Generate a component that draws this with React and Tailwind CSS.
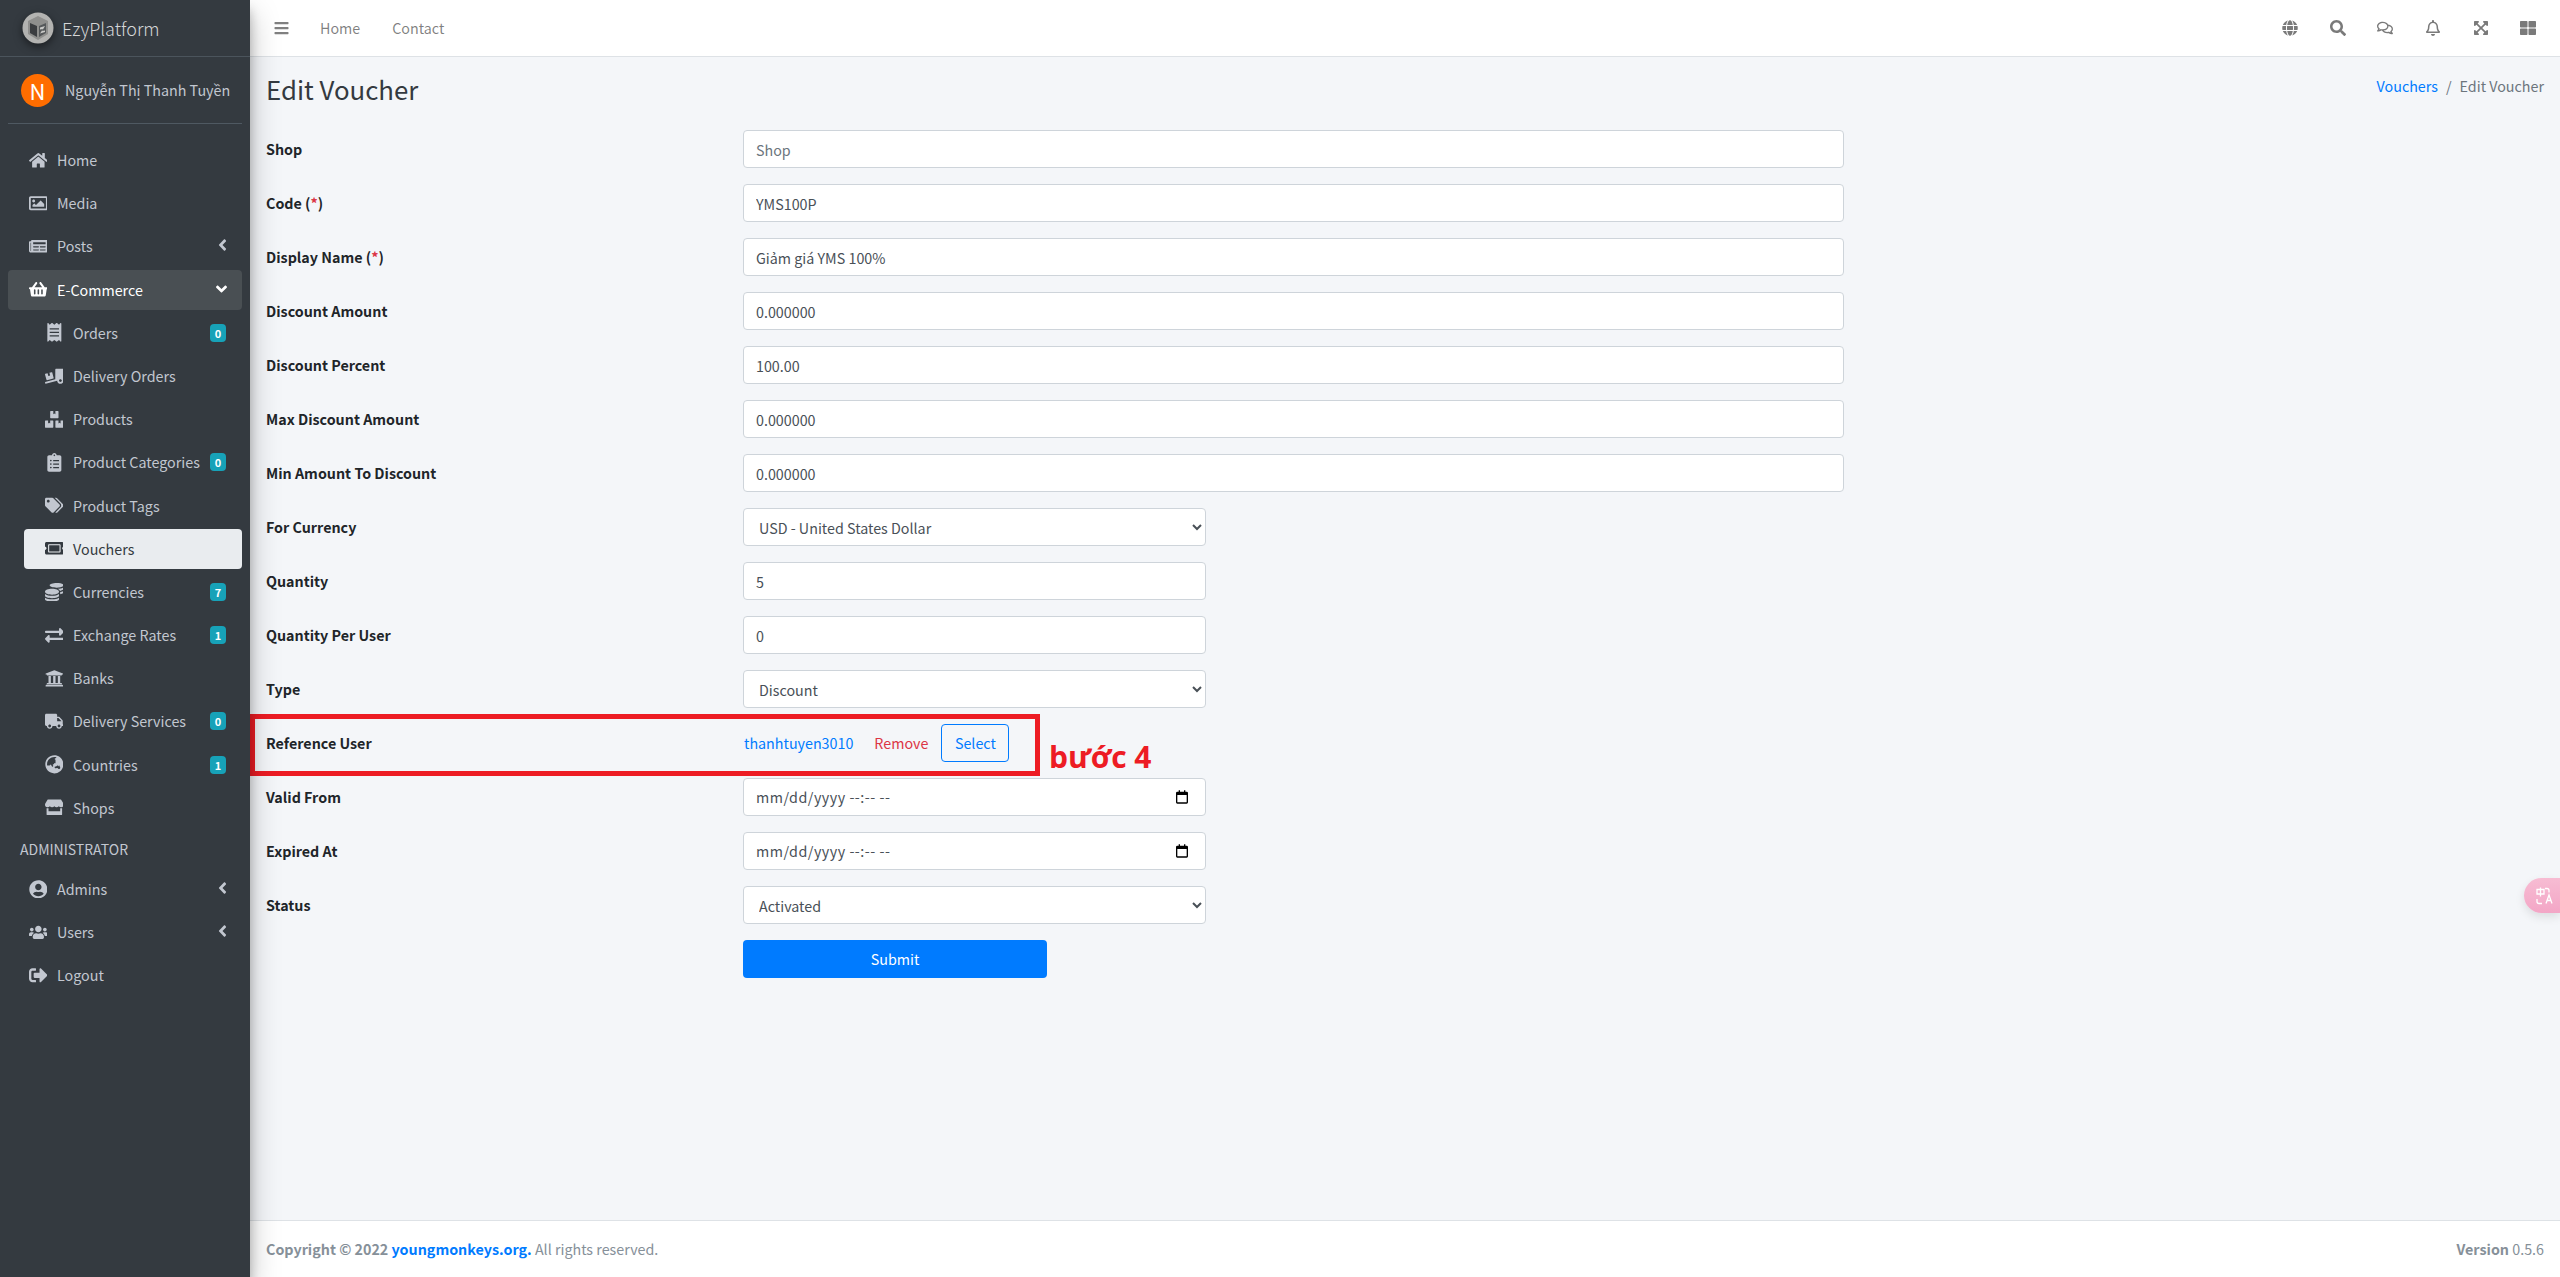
import React from "react";
import {
  FaHome, FaRegImage, FaNewspaper, FaShoppingBasket, FaReceipt, FaTruckLoading, FaBoxes, FaClipboardList, FaTags,
  FaTicketAlt, FaCoins, FaExchangeAlt, FaUniversity, FaTruck, FaGlobeAsia, FaStore, FaUserCircle, FaUsers,
  FaSignOutAlt, FaAngleLeft, FaAngleDown, FaBars, FaGlobe, FaSearch, FaRegComments, FaRegBell,
  FaExpandArrowsAlt, FaThLarge,
} from "react-icons/fa";

const iconCls = "h-[18.7px] w-auto shrink-0";

function Item({ icon: Icon, label, badge, arrow, active, open, sub }) {
  return (
    <div className={`flex items-center h-10 mb-[3.2px] rounded pl-4 pr-4 ${sub ? "ml-4" : ""} ${active ? "bg-[#e9ecef] text-[#343a40]" : open ? "bg-[#494f53] text-white" : "text-[#c2c7d0]"}`}>
      <span className="w-[26px] ml-[1px] flex justify-center shrink-0"><Icon className={iconCls} /></span>
      <span className="ml-[6px] flex-1 whitespace-nowrap">{label}</span>
      {badge !== undefined && (
        <span className="w-4 h-[18px] rounded bg-[#17a2b8] text-white text-[11px] font-bold leading-[18px] text-center">{badge}</span>
      )}
      {arrow === "left" && <FaAngleLeft className="h-[18px] w-[9px] -mt-[2px] -mr-[1px]" />}
      {arrow === "down" && <FaAngleDown className="h-[18px] w-[11px] -mt-[2px] -mr-[1px]" />}
    </div>
  );
}

function Logo() {
  return (
    <svg viewBox="0 0 32 32" className="w-[32px] h-[32px] shrink-0 drop-shadow-[0_3px_4px_rgba(0,0,0,0.5)]">
      <circle cx="16" cy="16" r="15.5" fill="#b3b3b1" />
      <path d="M16 4 L26 9 L26 22 L16 28 L6 22 L6 9 Z" fill="#8f8f8d" />
      <path d="M8 11 L15 14 L15 25 L8 21 Z" fill="#3b3d40" />
      <path d="M17 14 L24 11 L24 21 L17 25 Z" fill="#55585a" />
      <path d="M18 15.5 L23 14 L20 19 L23 18.5 L23 20 L18 21.5 L21 17 L18 17.5 Z" fill="#c9c9c7" />
    </svg>
  );
}

function Sidebar() {
  return (
    <aside className="w-[250px] shrink-0 h-full bg-[#343a40] z-20 shadow-[0_14px_28px_rgba(0,0,0,0.25),0_10px_10px_rgba(0,0,0,0.22)]">
      <div className="h-[57px] flex items-center pl-[22px] border-b border-[#4b545c]">
        <Logo />
        <span className="ml-2 text-[18px] font-light text-[#d4d6d8] leading-none">EzyPlatform</span>
      </div>
      <div className="mx-2 h-[67px] flex items-center pl-[13px] border-b border-[#4f5962]">
        <span className="w-[33px] h-[33px] rounded-full bg-[#ff6d00] text-white text-[22px] leading-[33px] text-center shrink-0">N</span>
        <span className="ml-[11px] text-[14.3px] text-[#c2c7d0] whitespace-nowrap">Nguyễn Thị Thanh Tuyền</span>
      </div>
      <nav className="mx-2 mt-[16px] leading-6">
        <Item icon={FaHome} label="Home" />
        <Item icon={FaRegImage} label="Media" />
        <Item icon={FaNewspaper} label="Posts" arrow="left" />
        <Item icon={FaShoppingBasket} label="E-Commerce" arrow="down" open />
        <Item sub icon={FaReceipt} label="Orders" badge="0" />
        <Item sub icon={FaTruckLoading} label="Delivery Orders" />
        <Item sub icon={FaBoxes} label="Products" />
        <Item sub icon={FaClipboardList} label="Product Categories" badge="0" />
        <Item sub icon={FaTags} label="Product Tags" />
        <Item sub icon={FaTicketAlt} label="Vouchers" active />
        <Item sub icon={FaCoins} label="Currencies" badge="7" />
        <Item sub icon={FaExchangeAlt} label="Exchange Rates" badge="1" />
        <Item sub icon={FaUniversity} label="Banks" />
        <Item sub icon={FaTruck} label="Delivery Services" badge="0" />
        <Item sub icon={FaGlobeAsia} label="Countries" badge="1" />
        <Item sub icon={FaStore} label="Shops" />
        <div className="h-[38px] pl-3 pt-[6px] text-[14px] leading-6 text-[#c2c7d0]">ADMINISTRATOR</div>
        <Item icon={FaUserCircle} label="Admins" arrow="left" />
        <Item icon={FaUsers} label="Users" arrow="left" />
        <Item icon={FaSignOutAlt} label="Logout" />
      </nav>
    </aside>
  );
}

function Header() {
  const icons = [FaGlobe, FaSearch, FaRegComments, FaRegBell, FaExpandArrowsAlt, FaThLarge];
  return (
    <header className="h-[57px] shrink-0 bg-white border-b border-[#dee2e6] flex items-center text-[#00000080]">
      <FaBars className="ml-6 w-[15px] h-[16px] text-[#808080]" />
      <span className="ml-[31px] mr-8">Home</span>
      <span>Contact</span>
      <div className="ml-auto mr-2 flex">
        {icons.map((I, i) => (
          <span key={i} className="w-[47.6px] flex justify-center text-[#7a7a7a]"><I className="h-4 w-auto" /></span>
        ))}
      </div>
    </header>
  );
}

const inputCls = "h-[38px] rounded border border-[#ced4da] bg-white px-3 text-[14.3px] text-[#495057] placeholder:text-[#6c757d] outline-none";

function Row({ label, req, children }) {
  return (
    <div className="flex items-center h-[38px] mb-4">
      <label className="w-[477px] shrink-0 font-bold text-[#212529]">
        {label}
        {req && <> (<span className="text-[#dc3545]">*</span>)</>}
      </label>
      {children}
    </div>
  );
}

const Text = ({ value, placeholder }) => <input readOnly className={`${inputCls} w-[1101px]`} defaultValue={value} placeholder={placeholder} />;
const Short = ({ value }) => <input readOnly className={`${inputCls} w-[463px]`} defaultValue={value} />;
const Sel = ({ value }) => (
  <select className={`${inputCls} w-[463px] pl-[11px]`} defaultValue={value}><option>{value}</option></select>
);
const DateT = () => (
  <div className={`${inputCls} w-[463px] flex items-center justify-between pr-[15px]`}>
    <span className="tracking-[0.5px]">mm/dd/yyyy --:-- --</span>
    <svg viewBox="0 0 24 24" className="w-4 h-4" fill="#000">
      <path d="M7 2h2v2h6V2h2v2h2a2 2 0 0 1 2 2v14a2 2 0 0 1-2 2H5a2 2 0 0 1-2-2V6a2 2 0 0 1 2-2h2V2zM5 9v11h14V9H5z" />
    </svg>
  </div>
);

function Form() {
  return (
    <main className="flex-1 min-h-0 bg-[#f4f6f9] px-4 relative">
      <div className="h-[73px] flex justify-between">
        <h1 className="pt-[15px] text-[25.8px] leading-[34.56px] text-[#343a40] font-normal">Edit Voucher</h1>
        <div className="pt-[17px] leading-6 text-[#6c757d]">
          <span className="text-[#007bff]">Vouchers</span><span className="px-2">/</span><span>Edit Voucher</span>
        </div>
      </div>
      <Row label="Shop"><Text placeholder="Shop" /></Row>
      <Row label="Code" req><Text value="YMS100P" /></Row>
      <Row label="Display Name" req><Text value="Giảm giá YMS 100%" /></Row>
      <Row label="Discount Amount"><Text value="0.000000" /></Row>
      <Row label="Discount Percent"><Text value="100.00" /></Row>
      <Row label="Max Discount Amount"><Text value="0.000000" /></Row>
      <Row label="Min Amount To Discount"><Text value="0.000000" /></Row>
      <Row label="For Currency"><Sel value="USD - United States Dollar" /></Row>
      <Row label="Quantity"><Short value="5" /></Row>
      <Row label="Quantity Per User"><Short value="0" /></Row>
      <Row label="Type"><Sel value="Discount" /></Row>
      <Row label="Reference User">
        <span className="ml-[1px] text-[#007bff]">thanhtuyen3010</span>
        <span className="ml-[21px] text-[#dc3545]">Remove</span>
        <button className="ml-[13px] h-[38px] w-[68px] rounded border border-[#007bff] text-[#007bff]">Select</button>
      </Row>
      <Row label="Valid From"><DateT /></Row>
      <Row label="Expired At"><DateT /></Row>
      <Row label="Status"><Sel value="Activated" /></Row>
      <div className="pl-[477px]">
        <button className="h-[38px] w-[304px] rounded bg-[#007bff] text-white">Submit</button>
      </div>

      <div className="absolute left-0 top-[657px] w-[790px] h-[62px] border-[5px] border-[#ed1c24] pointer-events-none" />
      <div className="absolute left-[799px] top-[677px] text-[30px] leading-[46px] font-bold text-[#ed1c24] whitespace-nowrap font-['Open_Sans',sans-serif]">bước 4</div>

      <div className="absolute right-0 top-[821px] w-9 h-[35px] rounded-l-full bg-gradient-to-b from-[#f7bcd3] to-[#f3a6c6] shadow-[0_4px_10px_rgba(0,0,0,0.1)] flex items-center pl-[12px]">
        <svg viewBox="0 0 18 18" className="w-[18px] h-[18px]" fill="none" stroke="#fff" strokeWidth="1.3">
          <path d="M1 2.5h7v4.5H1z M4.5 0.5v9 M1 12v2.5a2 2 0 0 0 2 2h3 M9 1.5h2a2 2 0 0 1 2 2v2 M10 16.5l3-8.5 3 8.5 M11 13.5h4" />
        </svg>
      </div>
    </main>
  );
}

function Footer() {
  return (
    <footer className="h-[57px] shrink-0 bg-white border-t border-[#dee2e6] flex items-center justify-between px-4 text-[#869099]">
      <div><b>Copyright © 2022 <span className="text-[#007bff]">youngmonkeys.org.</span></b> All rights reserved.</div>
      <div><b>Version</b> 0.5.6</div>
    </footer>
  );
}

export default function App() {
  return (
    <div className="flex h-screen w-full overflow-hidden text-[14.3px] leading-6 font-['Noto_Sans_CJK_SC','Noto_Sans',sans-serif]">
      <Sidebar />
      <div className="flex-1 min-w-0 flex flex-col">
        <Header />
        <Form />
        <Footer />
      </div>
    </div>
  );
}
